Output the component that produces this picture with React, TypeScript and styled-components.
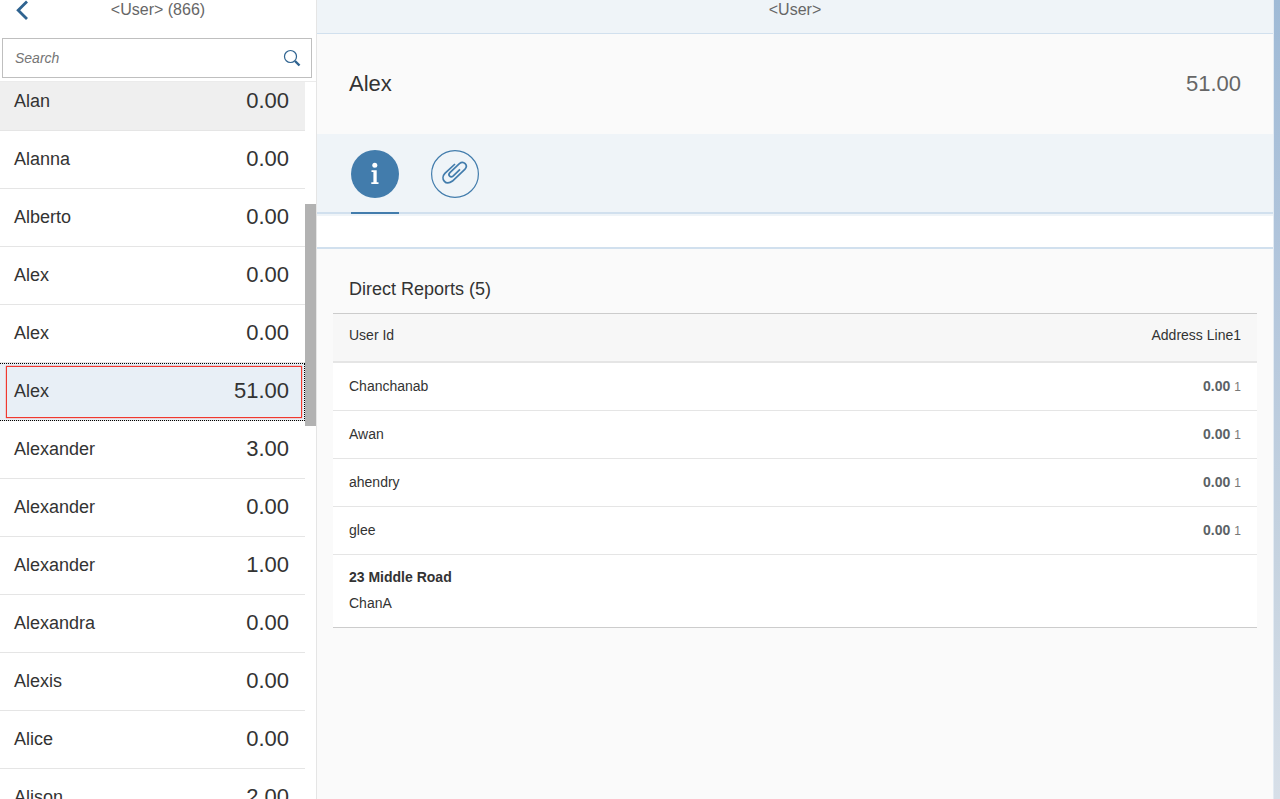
import React from "react";
import styled, { createGlobalStyle } from "styled-components";

const font = `"Liberation Sans", Arial, sans-serif`;

const GlobalStyle = createGlobalStyle`
  *, *::before, *::after { box-sizing: border-box; }
  body { margin: 0; overflow: hidden; background: #fafafa; color: #333; font-family: ${font}; font-size: 14px; }
  h1, h2, p, ul { margin: 0; padding: 0; font-weight: normal; }
  button, input { font-family: inherit; }
`;

const Shell = styled.div`
  display: flex;
  height: 100vh;
`;

const Master = styled.aside`
  display: flex;
  flex-direction: column;
  flex: none;
  width: 317px;
  background: #fff;
  border-right: 1px solid #e5e5e5;
`;

const MasterHeader = styled.header`
  display: grid;
  grid-template-columns: 44px 1fr 44px;
  height: 38px;
`;

const BackButton = styled.button`
  display: flex;
  justify-content: center;
  height: 20px;
  padding: 0;
  border: 0;
  background: none;
  cursor: pointer;
`;

const BarTitle = styled.h2`
  color: #666;
  font-size: 16px;
  line-height: 20px;
  text-align: center;
`;

const SearchForm = styled.form`
  display: flex;
  align-items: center;
  flex: none;
  height: 40px;
  margin: 0 4px 3px 2px;
  border: 1px solid #bfbfbf;
  background: #fff;
`;

const SearchInput = styled.input`
  flex: 1;
  min-width: 0;
  height: 36px;
  padding: 0 12px;
  border: 0;
  outline: 0;
  background: none;
  color: #333;
  font-size: 14px;
  &::placeholder { color: #757575; font-style: italic; opacity: 1; }
`;

const SearchButton = styled.button`
  display: flex;
  align-items: center;
  justify-content: center;
  width: 38px;
  height: 36px;
  padding: 0;
  border: 0;
  background: none;
  cursor: pointer;
`;

const ListViewport = styled.div`
  position: relative;
  flex: 1;
  min-height: 0;
  overflow: hidden;
  border-top: 1px solid #ebebeb;
`;

const UserList = styled.ul`
  margin: -9px 11px 0 0;
  list-style: none;
`;

const UserRow = styled.li<{ $tone?: "hover" | "selected" }>`
  position: relative;
  display: flex;
  align-items: center;
  justify-content: space-between;
  height: 58px;
  padding: 0 16px 2px 14px;
  border-bottom: 1px solid #e5e5e5;
  background: ${({ $tone }) =>
    $tone === "hover" ? "#efefef" : $tone === "selected" ? "#e8eff6" : "#fff"};

  ${({ $tone }) =>
    $tone === "selected" &&
    `
    &::before {
      content: "";
      position: absolute;
      inset: 0 0 -1px 0;
      border: 1px dotted #000;
      border-left: 0;
    }
    &::after {
      content: "";
      position: absolute;
      inset: 3px 3px 2px 6px;
      border: 1px solid #f0392f;
      box-shadow: 0 0 1px #f0392f;
    }
  `}
`;

const UserName = styled.span`
  font-size: 18px;
  line-height: 22px;
`;

const UserValue = styled.span`
  font-size: 22px;
  line-height: 26px;
`;

const ScrollThumb = styled.div`
  position: absolute;
  top: 122px;
  right: 0;
  width: 11px;
  height: 222px;
  background: #b2b2b2;
`;

const Detail = styled.main`
  display: flex;
  flex-direction: column;
  flex: 1;
  min-width: 0;
  background: #fafafa;
`;

const DetailBar = styled.header`
  height: 34px;
  border-bottom: 1px solid #d1e0ee;
  background: #eff4f8;
`;

const ObjectHeader = styled.section`
  display: flex;
  align-items: center;
  justify-content: space-between;
  height: 100px;
  padding: 0 32px;
  font-size: 22px;
`;

const ObjectTitle = styled.h1`
  font-size: 22px;
`;

const ObjectNumber = styled.span`
  color: #666;
`;

const TabBar = styled.nav`
  display: flex;
  gap: 32px;
  height: 80px;
  padding: 16px 34px 0;
  border-bottom: 2px solid #d1e0ee;
  background: #eff4f8;
`;

const Tab = styled.button<{ $active?: boolean }>`
  width: 48px;
  height: 64px;
  padding: 0 0 14px;
  border: 0;
  border-bottom: 2px solid ${({ $active }) => ($active ? "#427cac" : "transparent")};
  background: none;
  cursor: pointer;
  svg { display: block; }
`;

const TabContent = styled.div`
  height: 35px;
  border-bottom: 2px solid #d1e0ee;
  background: #fff;
  box-shadow: inset 0 2px #eff4f8;
`;

const Reports = styled.section`
  padding: 16px;
`;

const ReportsTitle = styled.h2`
  padding: 0 16px;
  font-size: 18px;
  line-height: 48px;
`;

const ReportsTable = styled.table`
  width: 100%;
  border-collapse: separate;
  border-spacing: 0;
  border-top: 1px solid #ccc;
  border-bottom: 1px solid #ccc;
  background: #fff;
`;

const HeadCell = styled.th<{ $end?: boolean }>`
  height: 49px;
  padding: 0 16px 6px;
  border-bottom: 2px solid #e5e5e5;
  background: #f7f7f7;
  font-weight: normal;
  text-align: ${({ $end }) => ($end ? "right" : "left")};
`;

const Cell = styled.td<{ $end?: boolean }>`
  height: 48px;
  padding: 0 16px 2px;
  border-bottom: 1px solid #e5e5e5;
  text-align: ${({ $end }) => ($end ? "right" : "left")};
`;

const FooterCell = styled.td`
  height: 72px;
  padding: 0 16px 2px;
  line-height: 26px;
`;

const Amount = styled.strong`
  color: #5b6266;
`;

const Unit = styled.span`
  margin-left: 4px;
  color: #777;
  font-size: 12px;
`;

const Backdrop = styled.div`
  flex: none;
  width: 7px;
  border-left: 1px solid #e3ebf3;
  background: linear-gradient(#9fbad6, #b3c6dc 35%, #c6d3e0 70%, #d7dfe8);
`;

type User = { name: string; value: string; tone?: "hover" | "selected" };

const users: User[] = [
  { name: "Alan", value: "0.00", tone: "hover" },
  { name: "Alanna", value: "0.00" },
  { name: "Alberto", value: "0.00" },
  { name: "Alex", value: "0.00" },
  { name: "Alex", value: "0.00" },
  { name: "Alex", value: "51.00", tone: "selected" },
  { name: "Alexander", value: "3.00" },
  { name: "Alexander", value: "0.00" },
  { name: "Alexander", value: "1.00" },
  { name: "Alexandra", value: "0.00" },
  { name: "Alexis", value: "0.00" },
  { name: "Alice", value: "0.00" },
  { name: "Alison", value: "2.00" },
];

const reports = ["Chanchanab", "Awan", "ahendry", "glee"];

const BackIcon = () => (
  <svg width="14" height="20" viewBox="0 0 14 20" fill="none" stroke="#2f6390" strokeWidth="2.8">
    <path d="M12 1.5 3.2 10.2 12 19" />
  </svg>
);

const SearchIcon = () => (
  <svg width="18" height="18" viewBox="0 0 18 18" fill="none" stroke="#2f6390">
    <circle cx="7.5" cy="7.5" r="6" strokeWidth="1.2" />
    <path d="M12 12l4.500 4.500" strokeWidth="2.4" />
  </svg>
);

const InfoIcon = () => (
  <svg width="48" height="48" viewBox="0 0 48 48">
    <circle cx="24" cy="24" r="24" fill="#427cac" />
    <circle cx="23.800" cy="15.300" r="2.500" fill="#fff" />
    <path d="M20.500 20.300h5.200v12h1.800V34h-7.200v-1.700h2.100v-10.300h-1.900z" fill="#fff" />
  </svg>
);

const AttachmentIcon = () => (
  <svg width="48" height="48" viewBox="0 0 48 48" fill="none" stroke="#427cac">
    <circle cx="24" cy="24" r="23.400" strokeWidth="1.200" />
    <path
      d="M24 14 13.900 23.400C9 28.500 14.500 36.300 21.500 31L33.800 19.400C37.800 15.300 32.600 10.200 28.400 13.600L18.900 22.600C16.400 25.400 19.600 28.200 22.300 25.800L29 19.400"
      strokeWidth="1.700"
    />
  </svg>
);

export default function App() {
  return (
    <>
      <GlobalStyle />
      <Shell>
        <Master>
          <MasterHeader>
            <BackButton type="button" aria-label="Back">
              <BackIcon />
            </BackButton>
            <BarTitle>&lt;User&gt; (866)</BarTitle>
          </MasterHeader>
          <SearchForm role="search" onSubmit={(e) => e.preventDefault()}>
            <SearchInput type="text" aria-label="Search" placeholder="Search" />
            <SearchButton type="submit" aria-label="Search">
              <SearchIcon />
            </SearchButton>
          </SearchForm>
          <ListViewport>
            <UserList>
              {users.map((user, i) => (
                <UserRow key={i} $tone={user.tone}>
                  <UserName>{user.name}</UserName>
                  <UserValue>{user.value}</UserValue>
                </UserRow>
              ))}
            </UserList>
            <ScrollThumb />
          </ListViewport>
        </Master>
        <Detail>
          <DetailBar>
            <BarTitle>&lt;User&gt;</BarTitle>
          </DetailBar>
          <ObjectHeader>
            <ObjectTitle>Alex</ObjectTitle>
            <ObjectNumber>51.00</ObjectNumber>
          </ObjectHeader>
          <TabBar>
            <Tab type="button" $active aria-label="Information">
              <InfoIcon />
            </Tab>
            <Tab type="button" aria-label="Attachments">
              <AttachmentIcon />
            </Tab>
          </TabBar>
          <TabContent />
          <Reports>
            <ReportsTitle>Direct Reports (5)</ReportsTitle>
            <ReportsTable>
              <thead>
                <tr>
                  <HeadCell scope="col">User Id</HeadCell>
                  <HeadCell scope="col" $end>Address Line1</HeadCell>
                </tr>
              </thead>
              <tbody>
                {reports.map((id) => (
                  <tr key={id}>
                    <Cell>{id}</Cell>
                    <Cell $end>
                      <Amount>0.00</Amount>
                      <Unit>1</Unit>
                    </Cell>
                  </tr>
                ))}
                <tr>
                  <FooterCell colSpan={2}>
                    <strong>23 Middle Road</strong>
                    <p>ChanA</p>
                  </FooterCell>
                </tr>
              </tbody>
            </ReportsTable>
          </Reports>
        </Detail>
        <Backdrop />
      </Shell>
    </>
  );
}
